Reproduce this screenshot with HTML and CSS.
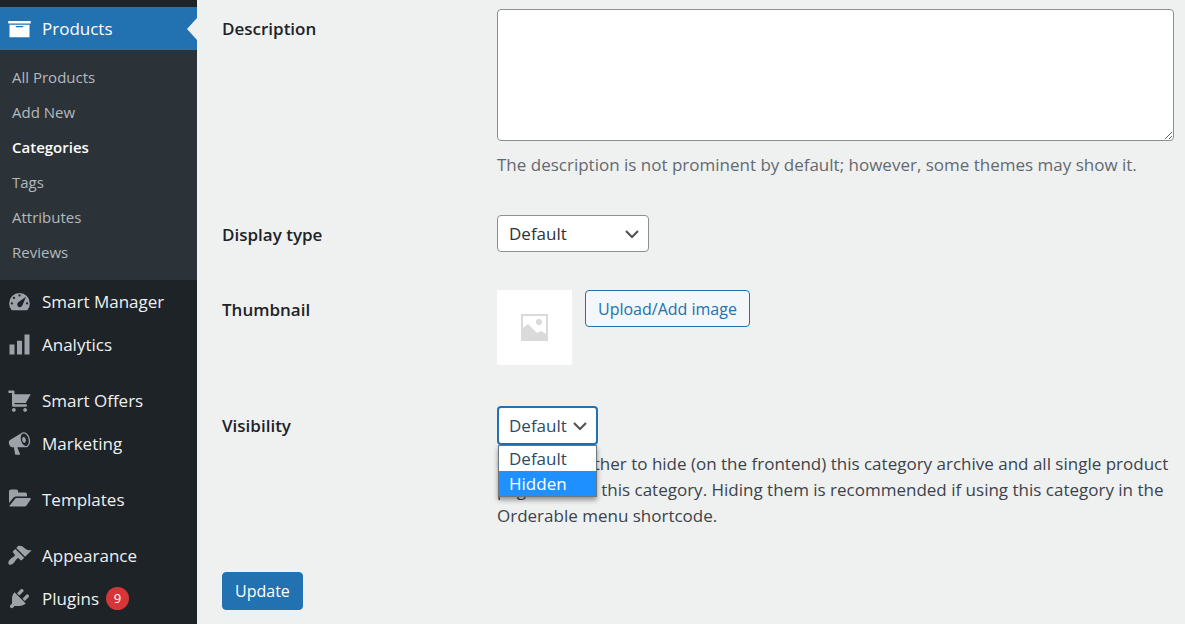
FILE: index.html
```
<!DOCTYPE html>
<html lang="en">
<head>
    <meta charset="UTF-8">
    <meta name="viewport" content="width=device-width, initial-scale=1.0">
    <title>Edit Category</title>
    <link rel="stylesheet" href="styles.css">
</head>
<body>
    <nav class="sidebar">
        <a href="#" class="menu-item current">
            <svg viewBox="0 0 20 20"><path d="M19 4v2H1V4h18zM2 7h16v10H2V7zm11 2V8H7v1h6z"/></svg>
            <span>Products</span>
        </a>
        <ul class="submenu">
            <li><a href="#">All Products</a></li>
            <li><a href="#">Add New</a></li>
            <li><a href="#" class="active">Categories</a></li>
            <li><a href="#">Tags</a></li>
            <li><a href="#">Attributes</a></li>
            <li><a href="#">Reviews</a></li>
        </ul>
        <div class="menu-group">
            <a href="#" class="menu-item">
                <svg viewBox="0 0 20 20"><path fill-rule="evenodd" d="M3.8 17h12.4A8.2 8.2 0 0 0 18.3 11.5a8.3 8.3 0 0 0-16.6 0A8.2 8.2 0 0 0 3.8 17zM10 4.2a.9.9 0 1 1 0 1.800.9.9 0 0 1 0-1.800zM5.600 6.200a.9.9 0 1 1 0 1.800.9.9 0 0 1 0-1.800zM3.900 10.600a.9.9 0 1 1 0 1.800.9.9 0 0 1 0-1.800zM16.100 10.600a.9.9 0 1 1 0 1.800.9.9 0 0 1 0-1.800zM15.200 6.200l-2.700 6.300c-.6 1.900-2.300 2.500-3.500 1.600s-1.100-2.800.3-3.700z"/></svg>
                <span>Smart Manager</span>
            </a>
            <a href="#" class="menu-item">
                <svg viewBox="0 0 20 20"><path d="M18 18V2h-4v16h4zm-6 0V7H8v11h4zm-6 0v-8H2v8h4z"/></svg>
                <span>Analytics</span>
            </a>
        </div>
        <div class="menu-group">
            <a href="#" class="menu-item">
                <svg viewBox="0 0 20 20"><path d="M6 13h9c.55 0 1 .45 1 1s-.45 1-1 1H5c-.55 0-1-.45-1-1V4H2c-.55 0-1-.45-1-1s.45-1 1-1h3c.55 0 1 .45 1 1v2h13l-4 7H6v1zm-.5 3c.83 0 1.500.67 1.500 1.500S6.330 19 5.500 19 4 18.330 4 17.500 4.670 16 5.500 16zm9 0c.83 0 1.500.67 1.500 1.500s-.67 1.500-1.500 1.500-1.500-.67-1.500-1.500.67-1.500 1.500-1.500z"/></svg>
                <span>Smart Offers</span>
            </a>
            <a href="#" class="menu-item">
                <svg viewBox="0 0 20 20"><path d="M18.15 5.94c.46 1.62.38 3.22-.02 4.48-.42 1.28-1.26 2.18-2.3 2.48-.16.06-.26.06-.4.06-.06.02-.12.02-.18.02-.06.02-.14.02-.22.02h-6.8l2.22 5.5c.02.14-.06.26-.14.34-.08.1-.24.16-.34.16H6.95c-.1 0-.26-.06-.34-.16-.08-.08-.16-.2-.14-.34l-1-5.5H4.25l-.02-.02c-.5.06-1.08-.18-1.54-.62s-.88-1.08-1.06-1.88c-.24-.8-.2-1.56-.02-2.2.18-.62.58-1.08 1.06-1.3l.02-.02 9-5.4c.1-.06.18-.1.24-.16.06-.04.14-.08.24-.12.16-.08.28-.12.5-.18 1.04-.3 2.24.1 3.22.98s1.84 2.24 2.26 3.86zm-2.58 5.98h-.02c.4-.1.74-.34 1.04-.7.58-.7.86-1.76.86-3.04 0-.64-.1-1.3-.28-1.98-.34-1.36-1.02-2.5-1.78-3.24s-1.68-1.1-2.46-.88c-.82.22-1.4.96-1.7 2-.32 1.04-.28 2.36.06 3.72.38 1.36 1 2.5 1.8 3.24.78.74 1.62 1.1 2.48.88zm-2.54-7.08c.22-.04.42-.02.62.04.38.16.76.48 1.02 1s.42 1.2.42 1.78c0 .3-.04.56-.12.8-.18.48-.44.84-.86.94-.34.1-.8-.06-1.14-.4s-.64-.86-.78-1.5c-.18-.62-.12-1.24.02-1.72s.48-.84.82-.94z"/></svg>
                <span>Marketing</span>
            </a>
        </div>
        <div class="menu-group">
            <a href="#" class="menu-item">
                <svg viewBox="0 0 20 20"><path d="M1.600 12.800V3.600C1.600 2.600 2.300 2 3.200 2h4.200c.9 0 1.500.6 1.500 1.500v.9h5.600c.9 0 1.500.6 1.500 1.500v1.600H7.600c-1.100 0-1.900.4-2.600 1.200zM2 15l4.200-5.300c.4-.6.9-.9 1.600-.9h10.500c.7 0 1 .6.600 1.200l-3.300 4.700c-.4.6-1 .9-1.700.9H2.600c-.6 0-.8-.3-.6-.6z"/></svg>
                <span>Templates</span>
            </a>
        </div>
        <div class="menu-group">
            <a href="#" class="menu-item">
                <svg viewBox="0 0 20 20"><path d="M14.48 11.06L7.41 3.99l1.5-1.5c.5-.56 2.3-.47 3.51.32 1.21.8 1.43 1.28 2.91 2.1 1.18.64 2.45 1.26 4.45.85zm-.71.71L6.7 4.7 4.93 6.47c-.39.39-.39 1.02 0 1.41l1.06 1.06c.39.39.39 1.03 0 1.42-.6.6-1.43 1.11-2.21 1.69-.35.26-.7.53-1.01.84C1.43 14.23.4 16.08 1.4 17.07c.99 1 2.84-.03 4.18-1.36.31-.31.58-.66.85-1.02.57-.78 1.08-1.61 1.69-2.21.39-.39 1.02-.39 1.41 0l1.06 1.06c.39.39 1.02.39 1.41 0z"/></svg>
                <span>Appearance</span>
            </a>
            <a href="#" class="menu-item">
                <svg viewBox="0 0 20 20"><path d="M13.11 4.36L9.87 7.6 8 5.73l3.24-3.24c.35-.34 1.05-.2 1.56.32.52.51.66 1.21.31 1.55zm-8 1.77l.91-1.12 9.01 9.01-1.19.84c-.71.71-2.63 1.16-3.82 1.16H6.14L4.9 17.26c-.59.59-1.54.59-2.12 0-.59-.58-.59-1.53 0-2.12l1.24-1.24v-3.88c0-1.13.4-3.19 1.09-3.89zm7.26 3.97l3.24-3.24c.34-.35 1.04-.21 1.55.31.52.51.66 1.21.31 1.55l-3.24 3.25z"/></svg>
                <span>Plugins</span>
                <span class="count">9</span>
            </a>
        </div>
    </nav>

    <main class="content">
        <form>
            <div class="form-row description-row">
                <label for="description">Description</label>
                <div class="field">
                    <textarea id="description"></textarea>
                    <p class="description">The description is not prominent by default; however, some themes may show it.</p>
                </div>
            </div>
            <div class="form-row type-row">
                <label for="displayType">Display type</label>
                <div class="field">
                    <select id="displayType">
                        <option>Default</option>
                        <option>Products</option>
                        <option>Subcategories</option>
                        <option>Both</option>
                    </select>
                </div>
            </div>
            <div class="form-row thumbnail-row">
                <label for="uploadBtn">Thumbnail</label>
                <div class="field thumbnail">
                    <div class="placeholder">
                        <svg viewBox="0 0 27 27"><path fill-rule="evenodd" d="M0 0h27v27H0zM2 2v12l5-4 9 9 4-2 5 3V2z"/><circle cx="18" cy="8" r="3"/></svg>
                    </div>
                    <button type="button" id="uploadBtn" class="button">Upload/Add image</button>
                </div>
            </div>
            <div class="form-row visibility-row">
                <label for="visibility">Visibility</label>
                <div class="field">
                    <div class="dropdown">
                        <select id="visibility" class="open">
                            <option>Default</option>
                            <option>Hidden</option>
                        </select>
                        <ul class="options" role="listbox" aria-label="Visibility">
                            <li role="option">Default</li>
                            <li role="option" class="selected" aria-selected="true">Hidden</li>
                        </ul>
                    </div>
                    <p class="help">Choose whether to hide (on the frontend) this category archive and all single product pages within this category. Hiding them is recommended if using this category in the Orderable menu shortcode.</p>
                </div>
            </div>
            <button type="submit" class="button primary">Update</button>
        </form>
    </main>
</body>
</html>
```
FILE: styles.css
```
* {
    box-sizing: border-box;
}

body {
    margin: 0;
    display: flex;
    min-height: 100vh;
    background-color: #eff1f1;
    color: #3c434a;
    font-family: "Open Sans", "Noto Sans", sans-serif;
    font-size: 17px;
    line-height: 26px;
}

ul {
    list-style: none;
    margin: 0;
    padding: 0;
}

p {
    margin: 0;
}

a {
    text-decoration: none;
}

/* Sidebar */
.sidebar {
    flex: 0 0 197px;
    padding-top: 7px;
    background-color: #1d2327;
}

.menu-item {
    position: relative;
    display: flex;
    align-items: center;
    height: 43px;
    padding-left: 7px;
    color: #f0f0f1;
}

.menu-item svg {
    width: 25px;
    height: 25px;
    margin-right: 10px;
    fill: #9ca2a7;
}

.menu-item.current {
    background-color: #2271b1;
    color: #fff;
}

.menu-item.current svg {
    fill: #fff;
}

.menu-item.current::after {
    content: "";
    position: absolute;
    right: 0;
    border: 11px solid transparent;
    border-left-width: 0;
    border-right-width: 10px;
    border-right-color: #eff1f1;
}

.menu-group + .menu-group {
    margin-top: 13px;
}

.submenu {
    padding: 10px 0;
    background-color: #2c3338;
    font-size: 15px;
}

.submenu a {
    display: block;
    padding-left: 12px;
    line-height: 35px;
    color: #b4b9be;
}

.submenu a.active {
    color: #fff;
    font-weight: 600;
}

.count {
    width: 23px;
    height: 23px;
    margin-left: 7px;
    border-radius: 50%;
    background-color: #d63638;
    color: #fff;
    font-size: 13px;
    line-height: 23px;
    text-align: center;
}

/* Edit form */
.content {
    flex: 1;
    min-width: 0;
    padding: 9px 11px 14px 25px;
}

.form-row {
    display: flex;
}

.form-row label {
    flex: 0 0 275px;
    color: #1d2327;
    font-weight: 600;
}

.field {
    flex: 1;
    min-width: 0;
}

.description-row {
    padding-bottom: 37px;
}

.form-row label {
    padding-top: 7px;
}

.type-row {
    padding-bottom: 38px;
}

.thumbnail-row {
    padding-bottom: 41px;
}

.visibility-row {
    padding-bottom: 43px;
}

textarea {
    display: block;
    width: 100%;
    height: 132px;
    margin-bottom: 11px;
    border: 1px solid #8c8f94;
    border-radius: 4px;
    background-color: #fff;
}

.description {
    color: #646970;
}

select {
    display: block;
    appearance: none;
    width: 152px;
    height: 37px;
    padding: 0 30px 0 11px;
    border: 1px solid #8c8f94;
    border-radius: 4px;
    background: #fff url('data:image/svg+xml;utf8,<svg xmlns="http://www.w3.org/2000/svg" viewBox="0 0 16 16"><path d="M2 5l6 6 6-6" fill="none" stroke="%23555" stroke-width="2.2"/></svg>') no-repeat right 8px center;
    background-size: 16px 16px;
    color: #2c3338;
    font-family: inherit;
    font-size: 17px;
}

select.open {
    width: 101px;
    height: 39px;
    padding: 0 24px 0 10px;
    border: 2px solid #2271b1;
    color: #2b4a66;
    outline: none;
}

.thumbnail {
    display: flex;
    align-items: flex-start;
    gap: 13px;
}

.placeholder {
    display: flex;
    justify-content: center;
    align-items: center;
    width: 75px;
    height: 75px;
    background-color: #fff;
}

.placeholder svg {
    width: 27px;
    height: 27px;
    fill: #dadada;
}

.button {
    height: 37px;
    padding: 0 12px;
    border: 1px solid #2271b1;
    border-radius: 4px;
    background-color: #f3f7f9;
    color: #2271b1;
    font-family: inherit;
    font-size: 16px;
    cursor: pointer;
}

.button.primary {
    height: 38px;
    background-color: #2271b1;
    color: #fff;
}

.dropdown {
    position: relative;
    margin-bottom: 6px;
}

/* Open option list, drawn over the help text */
.options {
    position: absolute;
    top: 39px;
    left: 1px;
    width: 99px;
    border: 1px solid #6b7780;
    background-color: #fff;
    color: #2b4a66;
    line-height: 25px;
    box-shadow: 0 3px 5px rgba(0, 0, 0, 0.4);
}

.options li {
    padding-left: 10px;
}

.options .selected {
    background-color: #1e90ff;
    color: #fff;
}
```
